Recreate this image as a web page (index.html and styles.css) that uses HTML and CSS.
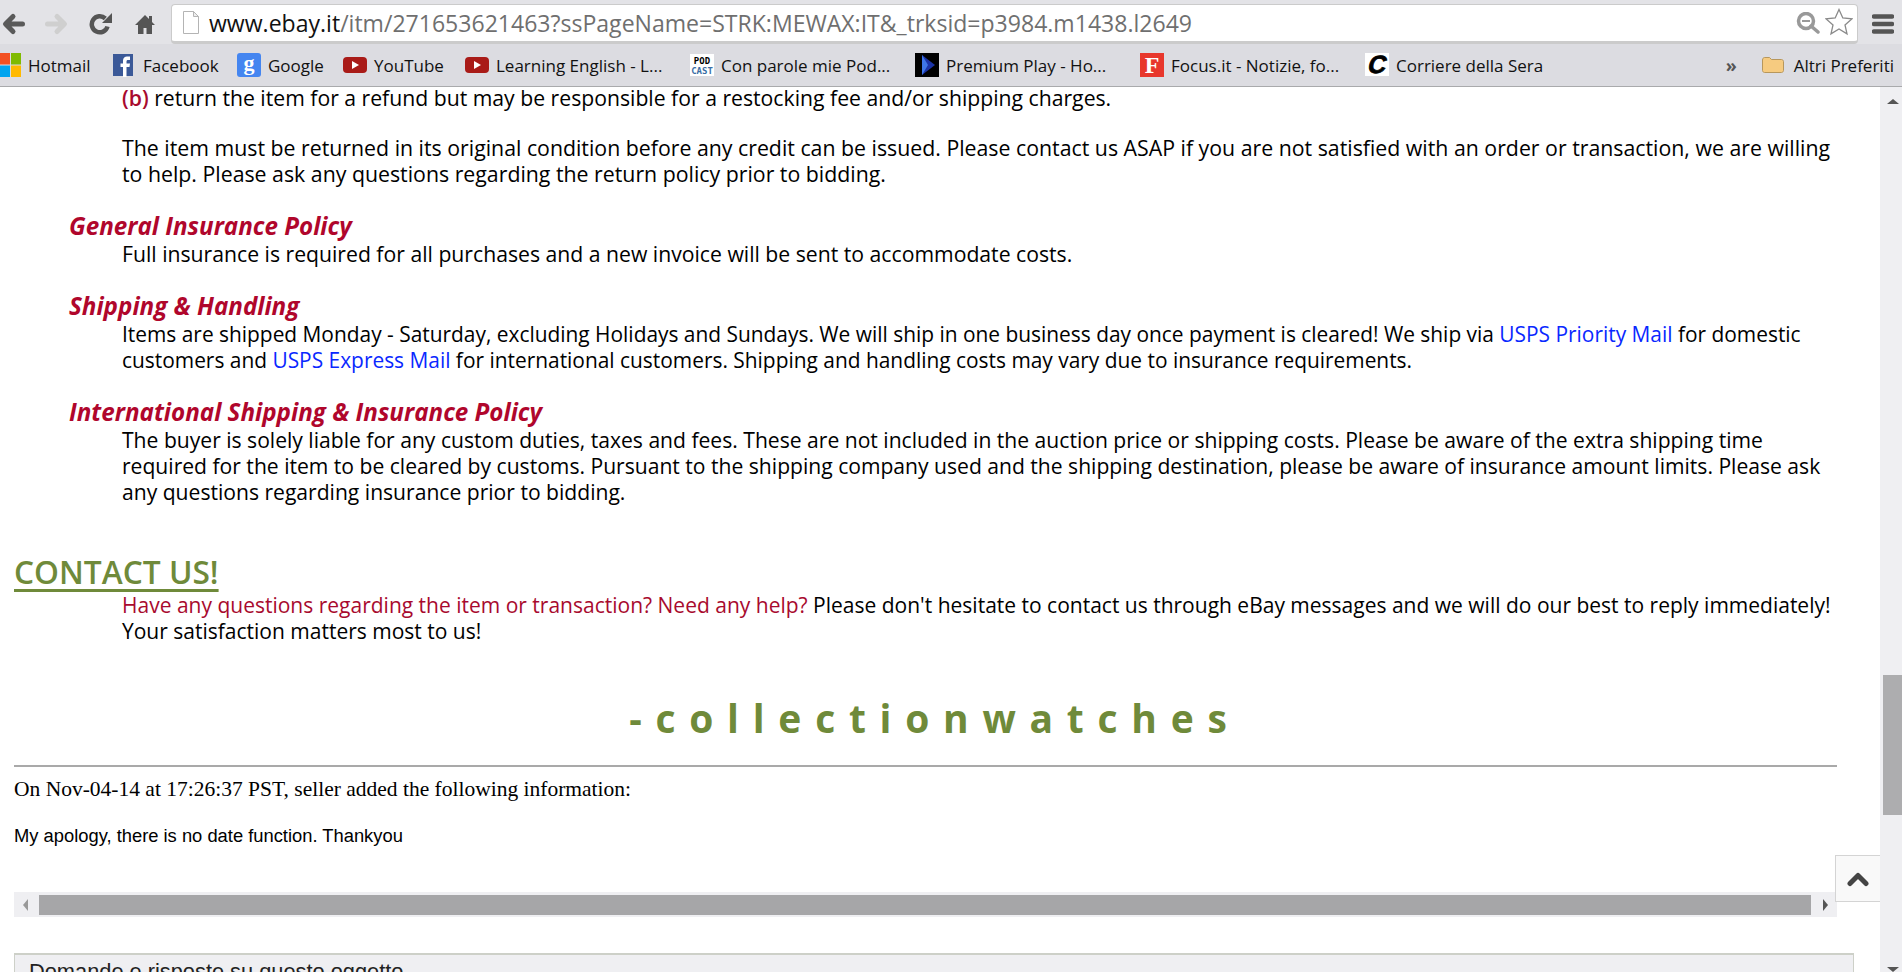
FILE: index.html
```html
<!DOCTYPE html>
<html lang="it">
<head>
<meta charset="utf-8">
<title>eBay</title>
<link rel="stylesheet" href="styles.css">
</head>
<body>
<div class="app">
  <header class="chrome">
    <div class="toolbar">
      <svg class="nav-ico" width="24" height="24" viewBox="0 0 24 24"><path d="M21.500 12H5M12 4.500 4.500 12l7.500 7.500" fill="none" stroke="#5a5a5a" stroke-width="5" stroke-linecap="round" stroke-linejoin="round"/></svg>
      <svg class="nav-ico" width="24" height="24" viewBox="0 0 24 24"><path d="M2.500 12H19M12 4.500l7.500 7.500-7.500 7.500" fill="none" stroke="#cfcfcf" stroke-width="5" stroke-linecap="round" stroke-linejoin="round"/></svg>
      <svg class="nav-ico" width="24" height="24" viewBox="0 0 24 24"><path d="M18.500 14.500a8 8 0 1 1-2.200-8" fill="none" stroke="#555" stroke-width="4.500"/><path d="M23 1v10h-10z" fill="#555"/></svg>
      <svg class="nav-ico" width="24" height="24" viewBox="0 0 24 24"><path d="M12 3 2 13h3v9h5.500v-6h3v6H19v-9h3l-3-3V4h-3v3z" fill="#555"/></svg>
      <div class="omnibox">
        <svg width="16" height="23" viewBox="0 0 16 23" class="page-ico"><path d="M.5.5h10l5 5v17H.5z" fill="#fff" stroke="#b4b4b4"/><path d="M10.500.5v5h5z" fill="#eee" stroke="#b4b4b4"/></svg>
        <span class="url"><span class="host">www.ebay.it</span>/itm/271653621463?ssPageName=STRK:MEWAX:IT&amp;_trksid=p3984.m1438.l2649</span>
        <svg class="zoom-ico" width="24" height="22" viewBox="0 0 24 22"><circle cx="10" cy="9" r="7.500" fill="none" stroke="#999" stroke-width="3.500"/><path d="M6 9h8" stroke="#999" stroke-width="2"/><path d="m15 14 7 6" stroke="#999" stroke-width="3.500" stroke-linecap="round"/></svg>
        <svg class="star-ico" width="28" height="28" viewBox="0 0 28 28"><path d="m14 1.500 3.800 8.500 9 .9-6.800 6 2 9L14 21l-8 4.900 2-9-6.800-6 9-.9z" fill="#fff" stroke="#8a8a8a" stroke-width="1.300"/></svg>
      </div>
      <svg class="menu-ico" width="22" height="20" viewBox="0 0 22 20"><path d="M2 2.500h18M2 10h18M2 17.500h18" stroke="#555" stroke-width="4.500" stroke-linecap="round"/></svg>
    </div>
    <nav class="bookmarks">
      <a class="bm w-hot"><svg width="21" height="24" viewBox="0 0 21 24"><path fill="#f25022" d="M0 0h10v11.500H0z"/><path fill="#7fba00" d="M11 0h10v11.500H11z"/><path fill="#00a4ef" d="M0 12.500h10V24H0z"/><path fill="#ffb900" d="M11 12.500h10V24H11z"/></svg><span>Hotmail</span></a>
      <a class="bm w-fb"><svg width="23" height="24" viewBox="0 0 23 24"><path fill="#3b5998" d="M0 1h20v22H0z"/><path fill="#fff" d="M10 24V14H7.500v-3.500H10V7.500C10 5 12 3.500 14 3.500h3V7h-2c-1 0-1.500.5-1.500 1.500v2H17l-.5 3.500h-3v10z"/></svg><span>Facebook</span></a>
      <a class="bm w-g"><svg width="24" height="24" viewBox="0 0 24 24"><rect width="24" height="24" rx="3" fill="#4485f0"/><text x="12" y="17" class="g-glyph">g</text></svg><span>Google</span></a>
      <a class="bm w-yt"><svg width="24" height="24" viewBox="0 0 24 24"><rect y="4" width="24" height="16" rx="4" fill="#a91b18"/><path d="M9 8l7 4-7 4z" fill="#fff"/></svg><span>YouTube</span></a>
      <a class="bm w-long"><svg width="24" height="24" viewBox="0 0 24 24"><rect y="4" width="24" height="16" rx="4" fill="#a91b18"/><path d="M9 8l7 4-7 4z" fill="#fff"/></svg><span>Learning English - L...</span></a>
      <a class="bm w-long"><svg width="24" height="24" viewBox="0 0 24 24"><path fill="#fff" d="M0 1h24v22H0z"/><text x="12" y="10.500" class="pod-a">POD</text><text x="12" y="20.500" class="pod-b">CAST</text></svg><span>Con parole mie Pod...</span></a>
      <a class="bm w-long"><svg width="24" height="24" viewBox="0 0 24 24"><path d="M0 0h24v24H0z"/><path d="M7 2l13 10-13 10z" fill="#1c34a8"/><path d="M7 2l6 10-6 10z" fill="#3f76e8"/></svg><span>Premium Play - Ho...</span></a>
      <a class="bm w-long"><svg width="24" height="24" viewBox="0 0 24 24"><path fill="#e8372c" d="M0 0h24v24H0z"/><text x="12" y="20" class="focus-f">F</text></svg><span>Focus.it - Notizie, fo...</span></a>
      <a class="bm"><svg width="24" height="24" viewBox="0 0 24 24"><path fill="#fff" d="M0 0h24v23H0z"/><text x="15.500" y="20" class="cds-c" transform="skewX(-14)">C</text></svg><span>Corriere della Sera</span></a>
      <span class="more">»</span>
      <a class="bm bm-last"><svg width="22" height="17" viewBox="0 0 22 17"><path d="M.5 3c0-1.500 1-2.500 2-2.500h5l2 2h10c1 0 2 1 2 2v9c0 1-1 2-2 2h-17c-1 0-2-1-2-2z" fill="#f6cb80" stroke="#b7975c"/></svg><span>Altri Preferiti</span></a>
    </nav>
  </header>
  <div class="viewport">
    <main class="page">
      <div class="policy">
        <p class="body top"><span class="red-b">(b)</span> return the item for a refund but may be responsible for a restocking fee and/or shipping charges.</p>
        <p class="body gap1">The item must be returned in its original condition before any credit can be issued. Please contact us ASAP if you are not satisfied with an order or transaction, we are willing to help. Please ask any questions regarding the return policy prior to bidding.</p>
        <h3 class="sub">General Insurance Policy</h3>
        <p class="body">Full insurance is required for all purchases and a new invoice will be sent to accommodate costs.</p>
        <h3 class="sub">Shipping &amp; Handling</h3>
        <p class="body ship">Items are shipped Monday - Saturday, excluding Holidays and Sundays. We will ship in one business day once payment is cleared! We ship via <span class="blue">USPS Priority Mail</span> for domestic customers and <span class="blue">USPS Express Mail</span> for international customers. Shipping and handling costs may vary due to insurance requirements.</p>
        <h3 class="sub">International Shipping &amp; Insurance Policy</h3>
        <p class="body intl">The buyer is solely liable for any custom duties, taxes and fees. These are not included in the auction price or shipping costs. Please be aware of the extra shipping time required for the item to be cleared by customs. Pursuant to the shipping company used and the shipping destination, please be aware of insurance amount limits. Please ask any questions regarding insurance prior to bidding.</p>
        <h2 class="contact">CONTACT US!</h2>
        <p class="body reach"><span class="red">Have any questions regarding the item or transaction? Need any help?</span> Please don't hesitate to contact us through eBay messages and we will do our best to reply immediately! Your satisfaction matters most to us!</p>
        <div class="sign">- c o l l e c t i o n w a t c h e s</div>
      </div>
      <hr class="rule">
      <p class="added">On Nov-04-14 at 17:26:37 PST, seller added the following information:</p>
      <p class="note">My apology, there is no date function. Thankyou</p>
      <div class="hscroll">
        <span class="tri-left"></span>
        <span class="hthumb"></span>
        <span class="tri-right"></span>
      </div>
      <section class="qa"><div class="qa-head">Domande e risposte su questo oggetto</div></section>
    </main>
    <div class="vscroll">
      <span class="tri-up"></span>
      <span class="vthumb"></span>
      <span class="tri-down"></span>
    </div>
    <button class="totop" aria-label="Top"><svg width="24" height="16" viewBox="0 0 24 16"><path d="M4 12.500 12 4.500l8 8" fill="none" stroke="#444" stroke-width="5" stroke-linecap="round" stroke-linejoin="round"/></svg></button>
  </div>
</div>
</body>
</html>
```
FILE: styles.css
```css
* { box-sizing: border-box; }
html, body { margin: 0; height: 100%; overflow: hidden; background: #fff; }
.app { height: 972px; display: flex; flex-direction: column; overflow: hidden; }
.chrome { height: 87px; flex: none; background: #dfdfe3; border-bottom: 1px solid #a9aaac; font-family: "Open Sans", "Noto Sans", sans-serif; }
.toolbar { height: 44px; display: flex; align-items: center; padding: 3px 0 0 1px; background: #e3e3e7; }
.nav-ico { flex: none; margin-right: 20px; }
.nav-ico:nth-child(4) { margin-right: 14px; }
.omnibox { flex: 1; height: 40px; margin-right: 14px; background: #fff; border: 1px solid #cbcbcb; border-bottom-width: 3px; border-radius: 4px; display: flex; align-items: center; padding: 0 4px 0 11px; }
.page-ico { flex: none; margin-right: 10px; }
.url { flex: 1; font-size: 23.060px; color: #6f6f6f; white-space: nowrap; }
.host { color: #111; }
.zoom-ico { margin-right: 5px; }
.star-ico { margin-bottom: 1px; }
.menu-ico { flex: none; margin-right: 8px; }
.bookmarks { height: 42px; display: flex; align-items: center; font-size: 17px; color: #111; background: #dcdce1; }
.bm { display: flex; align-items: center; gap: 7px; flex: none; white-space: nowrap; }
.w-hot { width: 113px; }
.w-fb { width: 124px; }
.w-g { width: 106px; }
.w-yt { width: 122px; }
.w-long { width: 225px; }
.bm-last { gap: 10px; padding-right: 8px; }
.more { margin-left: auto; font-weight: 700; color: #555; width: 36px; font-size: 18px; }
.g-glyph { font: 700 22px "Liberation Serif", serif; fill: #fff; text-anchor: middle; }
.pod-a, .pod-b { font: 700 9px "DejaVu Sans Mono", monospace; text-anchor: middle; }
.pod-b { fill: #3a6ea5; }
.focus-f { font: 700 24px "Liberation Serif", serif; fill: #fff; text-anchor: middle; }
.cds-c { font: 700 25px "Liberation Sans", sans-serif; fill: #000; text-anchor: middle; stroke: #000; stroke-width: .8px; }
.viewport { flex: 1; display: flex; position: relative; min-height: 0; }
.page { flex: 1; min-width: 0; padding-left: 14px; overflow: hidden; }
.policy { font-family: "Open Sans", "Noto Sans", sans-serif; width: 1828px; }
.body { margin: 0 0 0 108px; font-size: 21.200px; line-height: 26px; color: #000; width: 1716px; }
.top { margin-top: -2px; }
.gap1 { margin-top: 24px; font-size: 21.300px; }
.ship { font-size: 20.900px; }
.intl { font-size: 21.100px; }
.reach { font-size: 21px; margin-top: 2px; }
.sub { margin: 24px 0 0 55px; font-size: 24.200px; line-height: 30px; font-style: italic; font-weight: 700; color: #b0062c; }
.red-b { color: #a80a2e; font-weight: 600; }
.red { color: #a80a2e; }
.blue { color: #0a28ff; font-weight: 500; }
.contact { margin: 49px 0 0; font-size: 31.700px; line-height: 36px; font-weight: 600; color: #6f8a3a; text-decoration: underline; text-decoration-thickness: 3px; text-underline-offset: 5px; width: max-content; }
.sign { margin-top: 50px; text-align: center; font-size: 39px; line-height: 48px; font-weight: 700; color: #6f8a3a; word-spacing: 3.600px; }
.rule { margin: 23px 0 0; width: 1823px; border: 0; border-top: 2px solid #a9a9a9; }
.added { margin: 9px 0 0; font: 21.500px/26px "Liberation Serif", serif; color: #000; }
.note { margin: 24px 0 0; font: 18.350px/20px "Liberation Sans", sans-serif; color: #000; }
.hscroll { margin-top: 46px; width: 1823px; height: 25px; display: flex; align-items: center; background: #efeff2; padding: 0 9px; }
.hthumb { flex: 1; height: 20px; margin: 0 12px 0 11px; background: #a6a6a8; }
.tri-left { width: 0; height: 0; border: 6px solid transparent; border-left-width: 0; border-right: 5px solid #999; }
.tri-right { width: 0; height: 0; border: 6px solid transparent; border-right-width: 0; border-left: 5px solid #555; }
.qa { margin-top: 36px; width: 1840px; height: 30px; background: #efeff2; border: 1px solid #cdd0c8; border-top-width: 2px; border-bottom: 0; overflow: hidden; padding: 5px 0 0 14px; }
.qa-head { font: 400 21.800px/24px "Liberation Sans", sans-serif; color: #222; }
.vscroll { flex: none; width: 22px; background: #efeff2; position: relative; }
.vthumb { position: absolute; top: 588px; right: 0; width: 19px; height: 140px; background: #adadaf; }
.tri-up { position: absolute; top: 12px; right: 3px; border: 6px solid transparent; border-top-width: 0; border-bottom: 5px solid #555; }
.tri-down { position: absolute; bottom: 0; right: 3px; border: 6px solid transparent; border-bottom-width: 0; border-top: 5px solid #555; }
.totop { position: absolute; top: 768px; right: 22px; width: 45px; height: 47px; background: #f9f9f9; border: 1px solid #d4d4d4; border-right: 0; padding: 0; display: flex; align-items: center; justify-content: center; }
```
